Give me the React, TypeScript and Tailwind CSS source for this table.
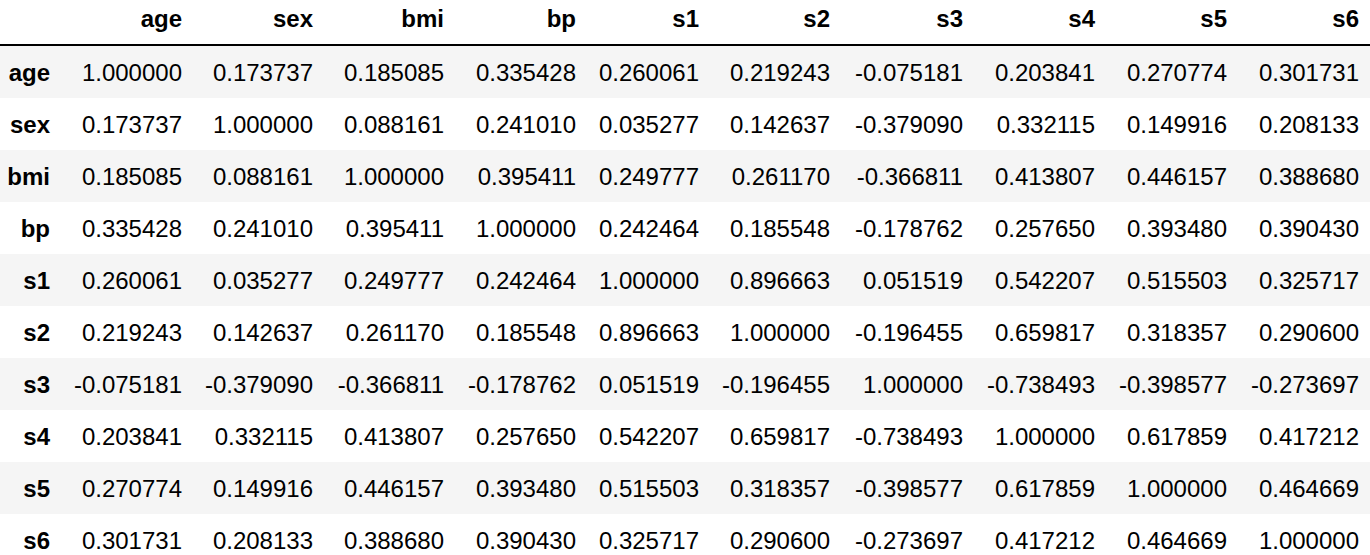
const cols = ["age", "sex", "bmi", "bp", "s1", "s2", "s3", "s4", "s5", "s6"];
const widths = ["w-[132px]", "w-[131px]", "w-[131px]", "w-[132px]", "w-[123px]", "w-[131px]", "w-[133px]", "w-[132px]", "w-[132px]", "w-[132px]"];
const data: string[][] = [
  ["1.000000", "0.173737", "0.185085", "0.335428", "0.260061", "0.219243", "-0.075181", "0.203841", "0.270774", "0.301731"],
  ["0.173737", "1.000000", "0.088161", "0.241010", "0.035277", "0.142637", "-0.379090", "0.332115", "0.149916", "0.208133"],
  ["0.185085", "0.088161", "1.000000", "0.395411", "0.249777", "0.261170", "-0.366811", "0.413807", "0.446157", "0.388680"],
  ["0.335428", "0.241010", "0.395411", "1.000000", "0.242464", "0.185548", "-0.178762", "0.257650", "0.393480", "0.390430"],
  ["0.260061", "0.035277", "0.249777", "0.242464", "1.000000", "0.896663", "0.051519", "0.542207", "0.515503", "0.325717"],
  ["0.219243", "0.142637", "0.261170", "0.185548", "0.896663", "1.000000", "-0.196455", "0.659817", "0.318357", "0.290600"],
  ["-0.075181", "-0.379090", "-0.366811", "-0.178762", "0.051519", "-0.196455", "1.000000", "-0.738493", "-0.398577", "-0.273697"],
  ["0.203841", "0.332115", "0.413807", "0.257650", "0.542207", "0.659817", "-0.738493", "1.000000", "0.617859", "0.417212"],
  ["0.270774", "0.149916", "0.446157", "0.393480", "0.515503", "0.318357", "-0.398577", "0.617859", "1.000000", "0.464669"],
  ["0.301731", "0.208133", "0.388680", "0.390430", "0.325717", "0.290600", "-0.273697", "0.417212", "0.464669", "1.000000"],
];

export default function App() {
  return (
    <div className="bg-white w-[1370px] h-[555px] overflow-hidden text-black" style={{ fontFamily: '"Liberation Sans", Arial, sans-serif' }}>
      <table className="table-fixed border-separate border-spacing-0 text-[24px] leading-[28px] w-[1371px]">
        <colgroup>
          <col className="w-[62px]" />
          {widths.map((w, i) => (
            <col key={i} className={w} />
          ))}
        </colgroup>
        <thead>
          <tr>
            <th className="p-0 border-b-2 border-black">
              <div className="h-[44px]"></div>
            </th>
            {cols.map((c) => (
              <th key={c} className="p-0 border-b-2 border-black font-bold">
                <div className="h-[44px] flex items-end justify-end pb-[11px] pr-[12px]">{c}</div>
              </th>
            ))}
          </tr>
        </thead>
        <tbody>
          {data.map((row, i) => (
            <tr key={i} className={i % 2 === 0 ? "bg-[#f5f5f5]" : "bg-white"}>
              <th className="p-0 font-bold">
                <div className="h-[52px] flex items-center justify-end pt-[2px] pr-[12px]">{cols[i]}</div>
              </th>
              {row.map((v, j) => (
                <td key={j} className="p-0 whitespace-nowrap">
                  <div className="h-[52px] flex items-center justify-end pt-[2px] pr-[12px]">{v}</div>
                </td>
              ))}
            </tr>
          ))}
        </tbody>
      </table>
    </div>
  );
}
